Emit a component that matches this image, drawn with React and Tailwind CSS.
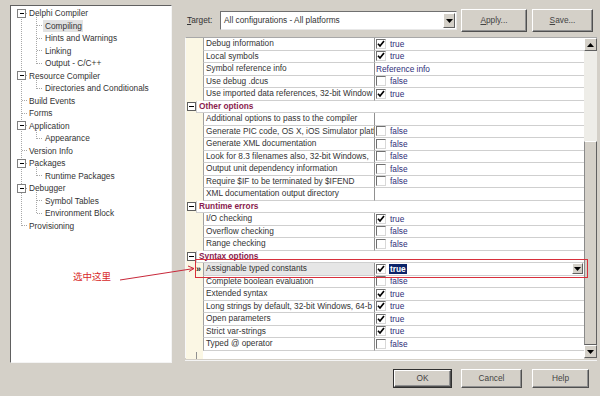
import React from "react";

const tree = [
  { t: "Delphi Compiler", l: 0, box: true },
  { t: "Compiling", l: 1, sel: true },
  { t: "Hints and Warnings", l: 1 },
  { t: "Linking", l: 1 },
  { t: "Output - C/C++", l: 1 },
  { t: "Resource Compiler", l: 0, box: true },
  { t: "Directories and Conditionals", l: 1 },
  { t: "Build Events", l: 0 },
  { t: "Forms", l: 0 },
  { t: "Application", l: 0, box: true },
  { t: "Appearance", l: 1 },
  { t: "Version Info", l: 0 },
  { t: "Packages", l: 0, box: true },
  { t: "Runtime Packages", l: 1 },
  { t: "Debugger", l: 0, box: true },
  { t: "Symbol Tables", l: 1 },
  { t: "Environment Block", l: 1 },
  { t: "Provisioning", l: 0 },
];

const groups = [
  [0, 4],
  [5, 6],
  [9, 10],
  [12, 13],
  [14, 16],
];

const rows = [
  { n: "Debug information", v: "true", c: true },
  { n: "Local symbols", v: "true", c: true },
  { n: "Symbol reference info", v: "Reference info" },
  { n: "Use debug .dcus", v: "false", c: false },
  { n: "Use imported data references, 32-bit Window", v: "true", c: true },
  { h: "Other options" },
  { n: "Additional options to pass to the compiler" },
  { n: "Generate PIC code, OS X, iOS Simulator platf", v: "false", c: false },
  { n: "Generate XML documentation", v: "false", c: false },
  { n: "Look for 8.3 filenames also, 32-bit Windows,", v: "false", c: false },
  { n: "Output unit dependency information", v: "false", c: false },
  { n: "Require $IF to be terminated by $IFEND", v: "false", c: false },
  { n: "XML documentation output directory" },
  { h: "Runtime errors" },
  { n: "I/O checking", v: "true", c: true },
  { n: "Overflow checking", v: "false", c: false },
  { n: "Range checking", v: "false", c: false },
  { h: "Syntax options" },
  { n: "Assignable typed constants", v: "true", c: true, sel: true },
  { n: "Complete boolean evaluation", v: "false", c: false },
  { n: "Extended syntax", v: "true", c: true },
  { n: "Long strings by default, 32-bit Windows, 64-b", v: "true", c: true },
  { n: "Open parameters", v: "true", c: true },
  { n: "Strict var-strings", v: "true", c: true },
  { n: "Typed @ operator", v: "false", c: false },
];

const cy = (i) => 7.25 + i * 12.5;

function TreeLines() {
  return (
    <svg className="absolute inset-0 pointer-events-none" width="160" height="356">
      <g stroke="#a8a8a8" strokeWidth="1" strokeDasharray="1 1" shapeRendering="crispEdges">
        <line x1="10.5" y1={cy(0)} x2="10.5" y2={cy(17)} />
        {tree.map((it, i) =>
          it.l === 0 ? (
            <line key={"h" + i} x1="10.5" y1={Math.floor(cy(i)) + 0.5} x2="17" y2={Math.floor(cy(i)) + 0.5} />
          ) : (
            <line key={"h" + i} x1="25.5" y1={Math.floor(cy(i)) + 0.5} x2="32" y2={Math.floor(cy(i)) + 0.5} />
          )
        )}
        {groups.map(([p, last], k) => (
          <line key={"v" + k} x1="25.5" y1={cy(p) + 4} x2="25.5" y2={Math.floor(cy(last)) + 0.5} />
        ))}
      </g>
      {tree.map((it, i) =>
        it.box ? (
          <g key={"b" + i} shapeRendering="crispEdges">
            <rect x="6.5" y={Math.floor(cy(i)) - 3.5} width="8" height="8" fill="#fff" stroke="#808080" />
            <line x1="8.5" y1={Math.floor(cy(i)) + 0.5} x2="13" y2={Math.floor(cy(i)) + 0.5} stroke="#000" />
          </g>
        ) : null
      )}
    </svg>
  );
}

function Check({ on }) {
  return (
    <span className="w-[10px] h-[10px] shrink-0 bg-white border border-t-[#707070] border-l-[#707070] border-r-[#d8d8d8] border-b-[#d8d8d8] flex items-center justify-center">
      {on && (
        <svg width="8" height="8" viewBox="0 0 8 8">
          <path d="M1 3.8 L3 6 L7 1" stroke="#000" strokeWidth="1.7" fill="none" />
        </svg>
      )}
    </span>
  );
}

function MinusBox() {
  return (
    <span className="w-[9px] h-[9px] shrink-0 bg-white border border-[#606060] flex items-center justify-center">
      <span className="w-[5px] h-px bg-black" />
    </span>
  );
}

function Arrow({ up }) {
  return (
    <svg width="7" height="4" viewBox="0 0 7 4">
      {up ? <path d="M0 4 L3.5 0 L7 4 Z" fill="#000" /> : <path d="M0 0 L7 0 L3.5 4 Z" fill="#000" />}
    </svg>
  );
}

function Btn({ children, w, def }) {
  return (
    <div
      className={
        "h-full flex items-center justify-center bg-[#d4d0c8] text-[#444] " +
        (def ? "border border-[#303030] " : "") +
        w
      }
    >
      <div className="w-full h-full flex items-center justify-center border border-t-white border-l-white border-r-[#505050] border-b-[#505050] shadow-[inset_-1px_-1px_0_#909090]">
        {children}
      </div>
    </div>
  );
}

export default function App() {
  return (
    <div className="relative w-[600px] h-[396px] overflow-hidden bg-[#d4d0c8] flex flex-col font-['Liberation_Sans',Arial,sans-serif] text-[8.3px] text-[#333]">
      <div className="flex h-[365px]">
        {/* Tree panel */}
        <div className="relative ml-[10px] mt-[5px] w-[162px] h-[358px] bg-white border border-t-[#606060] border-l-[#606060] border-r-[#f4f4f4] border-b-[#f4f4f4]">
          <TreeLines />
          <div className="relative pt-[1px]">
            {tree.map((it, i) => (
              <div key={i} className="h-[12.5px] flex items-center leading-none whitespace-nowrap">
                {it.l === 0 ? (
                  <span className="ml-[18px]">{it.t}</span>
                ) : (
                  <span
                    className={
                      "ml-[32px] pl-[2px] pr-[1px] h-[12px] flex items-center " + (it.sel ? "bg-[#e2e2e2]" : "")
                    }
                  >
                    {it.t}
                  </span>
                )}
              </div>
            ))}
          </div>
        </div>

        {/* Right side */}
        <div className="ml-[13px] w-[412px] flex flex-col">
          <div className="mt-[9px] h-[23px] flex items-center">
            <div className="w-[35px] pl-[2px]">
              <span className="underline">T</span>arget:
            </div>
            <div className="w-[237px] h-[19px] bg-white border border-t-[#707070] border-l-[#707070] border-r-[#e8e8e8] border-b-[#e8e8e8] flex items-center">
              <span className="pl-[3px] flex-1 whitespace-nowrap">All configurations - All platforms</span>
              <div className="w-[12px] h-[15px] mr-[1px] bg-[#d4d0c8] border border-t-white border-l-white border-r-[#606060] border-b-[#606060] flex items-center justify-center">
                <Arrow />
              </div>
            </div>
            <div className="ml-[4px] h-[23px]">
              <Btn w="w-[66px]">
                <span>
                  <span className="underline">A</span>pply...
                </span>
              </Btn>
            </div>
            <div className="ml-[5px] h-[23px]">
              <Btn w="w-[61px]">
                <span>
                  <span className="underline">S</span>ave...
                </span>
              </Btn>
            </div>
          </div>

          {/* Grid */}
          <div className="mt-[5px] h-[321px] w-[412px] flex border-t border-l border-t-[#a8a8a8] border-l-[#f8f8f8]">
            <div className="w-[398px] h-full flex flex-col bg-white">
              {rows.map((r, i) =>
                r.h ? (
                  <div key={i} className="h-[12.5px] shrink-0 flex">
                    <div className="w-[10px] bg-[#fbf7e4] flex items-center">
                      <span className="ml-[1px]">
                        <MinusBox />
                      </span>
                    </div>
                    <div className="flex-1 flex items-center pl-[2px] border-l border-b border-l-[#d0d0d0] border-b-[#cfcfcf] bg-white font-bold text-[#8a1c4e] leading-none">
                      {r.h}
                    </div>
                  </div>
                ) : (
                  <div key={i} className="h-[12.5px] shrink-0 flex">
                    <div className="w-[17px] shrink-0 bg-[#fbf7e4] flex items-center">
                      {r.sel && <span className="ml-[10px] text-[9px] font-bold leading-none text-[#222]">»</span>}
                    </div>
                    <div
                      className={
                        "w-[171px] shrink-0 flex items-center pl-[2px] border-l border-b border-l-[#a0a0a0] border-b-[#cfcfcf] overflow-hidden whitespace-nowrap leading-[11px] " +
                        (r.sel ? "bg-[#e6e6e6]" : "")
                      }
                    >
                      {r.n}
                    </div>
                    <div className="flex-1 min-w-0 flex items-center pl-[1px] border-l border-b border-l-[#909090] border-b-[#cfcfcf] whitespace-nowrap leading-none text-[#2e2e78]">
                      {r.c !== undefined ? (
                        <>
                          <Check on={r.c} />
                          {r.sel ? (
                            <>
                              <span className="ml-[3px] px-[1px] bg-[#0a246a] text-white font-bold h-[10px] flex items-center">
                                true
                              </span>
                              <div className="ml-auto mr-[1px] w-[11px] h-[11px] bg-[#d4d0c8] border border-t-white border-l-white border-r-[#606060] border-b-[#606060] flex items-center justify-center">
                                <Arrow />
                              </div>
                            </>
                          ) : (
                            <span className="ml-[4px]">{r.v}</span>
                          )}
                        </>
                      ) : r.v ? (
                        <span>{r.v}</span>
                      ) : null}
                    </div>
                  </div>
                )
              )}
              <div className="flex-1 flex">
                <div className="w-[17px] bg-[#fbf7e4] flex justify-start">
                  <div className="ml-[10px] mt-[1px] w-px h-[7px] bg-[#909090]" />
                </div>
                <div className="flex-1 bg-white" />
              </div>
            </div>
            {/* Scrollbar */}
            <div className="w-[13px] h-full flex flex-col bg-[#eeede8]">
              <div className="h-[13px] bg-[#d4d0c8] border border-t-white border-l-white border-r-[#606060] border-b-[#606060] flex items-center justify-center">
                <Arrow up />
              </div>
              <div className="h-[90px]" />
              <div className="h-[204px] bg-[#d4d0c8] border border-t-white border-l-[#8a8a8a] border-r-[#606060] border-b-[#606060]" />
              <div className="flex-1 bg-[#d4d0c8] border border-t-white border-l-white border-r-[#606060] border-b-[#606060] flex items-center justify-center">
                <Arrow />
              </div>
            </div>
          </div>
          <div className="mt-[2px] h-px w-[412px] bg-[#f4f4f4]" />
        </div>
      </div>

      {/* Bottom buttons */}
      <div className="h-[31px] flex justify-end pt-[4px] pr-[11px]">
        <div className="h-[19px]">
          <Btn w="w-[59px]" def>
            OK
          </Btn>
        </div>
        <div className="ml-[9px] h-[19px]">
          <Btn w="w-[61px]">Cancel</Btn>
        </div>
        <div className="ml-[10px] h-[19px]">
          <Btn w="w-[57px]">Help</Btn>
        </div>
      </div>

      {/* Annotation overlay */}
      <div className="absolute left-[195px] top-[259px] w-[393px] h-[19px] border border-[#d8303c] pointer-events-none" />
      <div className="absolute left-[73px] top-[272px] text-[9.5px] leading-none text-[#d82828] font-['Noto_Sans_CJK_SC',sans-serif]">
        选中这里
      </div>
      <svg className="absolute left-0 top-0 pointer-events-none" width="600" height="396">
        <line x1="120" y1="280" x2="194" y2="268.5" stroke="#c8283a" strokeWidth="1" />
        <path d="M188 266 L194 268.5 L189 271.5" stroke="#c8283a" strokeWidth="1" fill="none" />
      </svg>
    </div>
  );
}
